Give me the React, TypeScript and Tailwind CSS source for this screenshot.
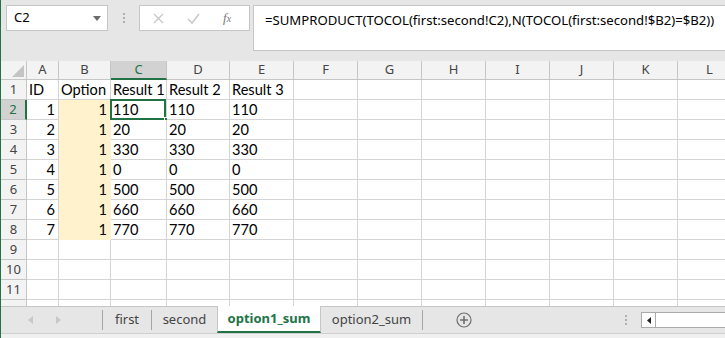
import React from "react";

type Col = { label: string; w: number };
const cols: Col[] = [
  { label: "A", w: 32 },
  { label: "B", w: 52 },
  { label: "C", w: 56 },
  { label: "D", w: 63 },
  { label: "E", w: 64 },
  { label: "F", w: 64 },
  { label: "G", w: 64 },
  { label: "H", w: 64 },
  { label: "I", w: 64 },
  { label: "J", w: 64 },
  { label: "K", w: 64 },
  { label: "L", w: 64 },
];

const data: (string | number)[][] = [
  ["ID", "Option", "Result 1", "Result 2", "Result 3"],
  [1, 1, "110", "110", "110"],
  [2, 1, "20", "20", "20"],
  [3, 1, "330", "330", "330"],
  [4, 1, "0", "0", "0"],
  [5, 1, "500", "500", "500"],
  [6, 1, "660", "660", "660"],
  [7, 1, "770", "770", "770"],
];

const uiFont = { fontFamily: '"Noto Sans", "Open Sans", sans-serif' };
const cellFont = { fontFamily: 'Lato, "Open Sans", sans-serif' };

function Cell({ r, c }: { r: number; c: number }) {
  const row = data[r - 1];
  const v = row ? row[c] : undefined;
  const yellow = c === 1 && r >= 2 && r <= 8;
  const numeric = typeof v === "number";
  const selected = r === 2 && c === 2;
  return (
    <div
      className={`relative shrink-0 h-[20px] border-r border-b box-border flex items-center overflow-visible whitespace-nowrap text-[14.6px] text-black ${
        yellow ? "bg-[#fff2cc] border-r-[#fff2cc] border-b-[#fff2cc]" : "bg-white border-[#d4d4d4]"
      } ${numeric ? "justify-end pr-[3px]" : "justify-start pl-[2px]"} ${yellow && r === 8 ? "border-b-[#d4d4d4]" : ""}`}
      style={{ width: cols[c].w, ...cellFont }}
    >
      {v !== undefined ? String(v) : ""}
      {selected && (
        <>
          <div className="absolute -left-[1px] -top-[1px] w-[56px] h-[21px] border-2 border-[#217346] pointer-events-none" />
          <div className="absolute right-[-4px] bottom-[-4px] w-[6px] h-[6px] bg-[#217346] border border-white" />
        </>
      )}
    </div>
  );
}

export default function App() {
  const rows = Array.from({ length: 12 }, (_, i) => i + 1);
  return (
    <div className="w-[725px] h-[338px] overflow-hidden bg-[#e6e6e6] border-l border-[#217346] flex flex-col" style={uiFont}>
      {/* Formula bar area */}
      <div className="h-[61px] shrink-0 flex items-start pt-[5px] pl-[5px]">
        <div className="w-[102px] shrink-0 h-[26px] bg-white border border-[#c6c6c6] flex items-center justify-between pl-[7px] pr-[6px]">
          <span className="text-[13px] text-black">C2</span>
          <svg width="8" height="5" viewBox="0 0 8 5">
            <path d="M0 0 L8 0 L4 5 Z" fill="#6b6b6b" />
          </svg>
        </div>
        <div className="w-[31px] shrink-0 h-[26px] flex flex-col items-center justify-center gap-[2px]">
          <div className="w-[2px] h-[2px] bg-[#b0b0b0]" />
          <div className="w-[2px] h-[2px] bg-[#b0b0b0]" />
          <div className="w-[2px] h-[2px] bg-[#b0b0b0]" />
        </div>
        <div className="w-[111px] shrink-0 h-[26px] bg-white border border-[#c6c6c6] flex items-center">
          <svg className="ml-[13px]" width="11" height="11" viewBox="0 0 11 11">
            <path d="M1 1 L10 10 M10 1 L1 10" stroke="#c8c8c8" strokeWidth="1.4" />
          </svg>
          <svg className="ml-[23px]" width="13" height="11" viewBox="0 0 13 11">
            <path d="M1 6 L5 10 L12 1" stroke="#c8c8c8" strokeWidth="1.6" fill="none" />
          </svg>
          <span className="ml-[23px] text-[13px] italic text-[#7a7a7a]" style={{ fontFamily: '"Liberation Serif", serif' }}>
            f<span className="text-[10px]">x</span>
          </span>
        </div>
        <div className="ml-[3px] flex-1 min-w-0 overflow-hidden h-[46px] bg-white border border-[#c6c6c6] border-r-0 pl-[11px] pt-[1px]">
          <span className="text-[13.15px] text-black whitespace-nowrap">
            =SUMPRODUCT(TOCOL(first:second!C2),N(TOCOL(first:second!$B2)=$B2))
          </span>
        </div>
      </div>

      {/* Grid */}
      <div className="h-[245px] shrink-0 overflow-hidden bg-white">
        {/* header row */}
        <div className="flex h-[19px]">
          <div className="w-[26px] shrink-0 h-[19px] bg-[#f3f3f3] border-r border-b border-[#c6c6c6] relative">
            <svg className="absolute right-[2px] bottom-[2px]" width="12" height="12" viewBox="0 0 12 12">
              <path d="M12 0 L12 12 L0 12 Z" fill="#c4c4c4" />
            </svg>
          </div>
          {cols.map((c) => {
            const sel = c.label === "C";
            return (
              <div
                key={c.label}
                className={`shrink-0 h-[19px] border-r box-border flex items-center justify-center text-[13px] ${
                  sel
                    ? "bg-[#d2d2d2] border-b-2 border-b-[#217346] border-r-[#c6c6c6] text-[#217346]"
                    : "bg-[#f3f3f3] border-b border-[#c6c6c6] text-[#444]"
                }`}
                style={{ width: c.w }}
              >
                {c.label}
              </div>
            );
          })}
        </div>
        {rows.map((r) => {
          const sel = r === 2;
          return (
            <div key={r} className="flex h-[20px]">
              <div
                className={`w-[26px] shrink-0 h-[20px] border-b box-border flex items-center justify-center text-[13px] ${
                  sel
                    ? "bg-[#d2d2d2] border-r-2 border-r-[#217346] border-b-[#c6c6c6] text-[#217346]"
                    : "bg-[#f3f3f3] border-r border-[#c6c6c6] text-[#444]"
                }`}
              >
                {r <= 11 ? r : ""}
              </div>
              {cols.map((_, ci) => (
                <Cell key={ci} r={r} c={ci} />
              ))}
            </div>
          );
        })}
      </div>

      {/* Tab bar */}
      <div className="h-[27px] shrink-0 flex items-stretch border-t border-[#c6c6c6] bg-[#e6e6e6] text-[13px]">
        <div className="w-[101px] shrink-0 flex items-center">
          <svg className="ml-[27px]" width="5" height="8" viewBox="0 0 5 8">
            <path d="M5 0 L0 4 L5 8 Z" fill="#c8c8c8" />
          </svg>
          <svg className="ml-[23px]" width="5" height="8" viewBox="0 0 5 8">
            <path d="M0 0 L5 4 L0 8 Z" fill="#c8c8c8" />
          </svg>
        </div>
        <div className="w-px shrink-0 my-[3px] bg-[#a6a6a6]" />
        <div className="w-[48px] shrink-0 flex items-center justify-center text-[#444]">first</div>
        <div className="w-px shrink-0 my-[3px] bg-[#a6a6a6]" />
        <div className="w-[65px] shrink-0 flex items-center justify-center text-[#444]">second</div>
        <div className="w-[104px] shrink-0 -mt-px flex items-center justify-center bg-white border-l border-r border-[#c6c6c6] border-b-2 border-b-[#217346] font-bold text-[#217346]">
          option1_sum
        </div>
        <div className="w-[101px] shrink-0 flex items-center justify-center text-[#444]">option2_sum</div>
        <div className="w-px shrink-0 my-[3px] bg-[#a6a6a6]" />
        <div className="w-[82px] shrink-0 flex items-center justify-center">
          <svg width="16" height="16" viewBox="0 0 16 16">
            <circle cx="8" cy="8" r="7" fill="none" stroke="#6e6e6e" strokeWidth="1.2" />
            <path d="M8 4 V12 M4 8 H12" stroke="#6e6e6e" strokeWidth="1.6" />
          </svg>
        </div>
        <div className="flex-1 flex items-center justify-end">
          <div className="flex flex-col gap-[2px] mr-[14px]">
            <div className="w-[2px] h-[2px] bg-[#b0b0b0]" />
            <div className="w-[2px] h-[2px] bg-[#b0b0b0]" />
            <div className="w-[2px] h-[2px] bg-[#b0b0b0]" />
          </div>
          <div className="w-[84px] h-[16px] bg-white border border-[#ababab] border-r-0 flex">
            <div className="w-[14px] h-full border-r border-[#ababab] flex items-center justify-center">
              <svg width="4" height="7" viewBox="0 0 4 7">
                <path d="M4 0 L0 3.5 L4 7 Z" fill="#222" />
              </svg>
            </div>
          </div>
        </div>
      </div>
      <div className="flex-1 border-t border-[#d0d0d0] bg-[#f0f0f0]" />
    </div>
  );
}
